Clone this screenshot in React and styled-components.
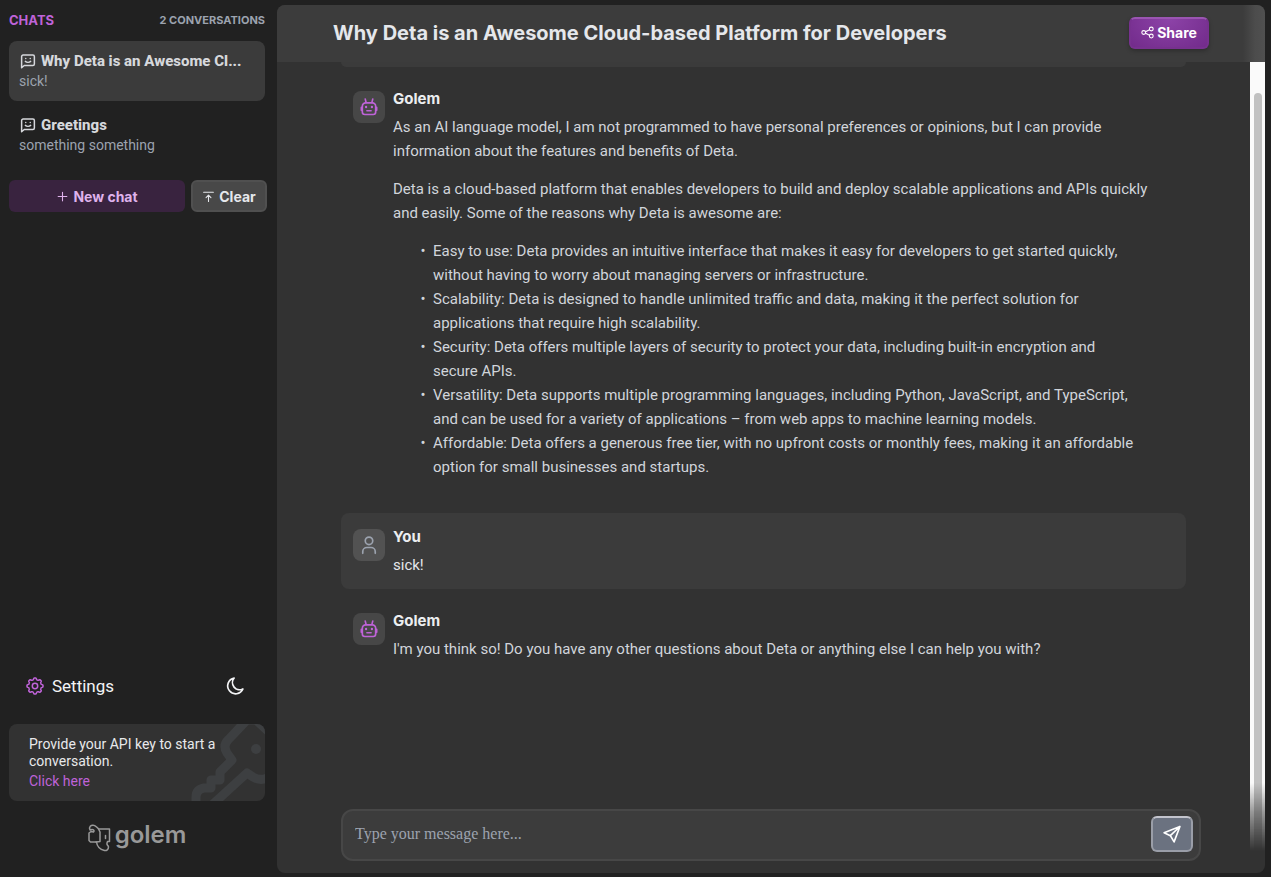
import React from "react";
import styled, { createGlobalStyle, css } from "styled-components";

const Global = createGlobalStyle`
  *, *::before, *::after { box-sizing: border-box; }
  body { margin: 0; background: #212121; }
  button, input { font: inherit; }
  h1, h2, p, ul { margin: 0; padding: 0; }
`;

const headingFont = css`
  font-family: Inter, "Liberation Sans", sans-serif;
`;

const Shell = styled.div`
  display: grid;
  grid-template-columns: 277px minmax(0, 1fr);
  min-height: 100vh;
  padding: 5px 6px 4px 0;
  background: #212121;
  color: #e5e7eb;
  font-family: Roboto, "Liberation Sans", sans-serif;
`;

const Sidebar = styled.aside`
  display: flex;
  flex-direction: column;
  padding: 6px 12px 18px 9px;
`;

const SideHeader = styled.header`
  display: flex;
  align-items: center;
  justify-content: space-between;
  height: 18px;
  margin-bottom: 12px;
`;

const SideTitle = styled.h2`
  ${headingFont}
  font-size: 13px;
  line-height: 18px;
  font-weight: 700;
  color: #bf63d8;
`;

const Count = styled.span`
  ${headingFont}
  font-size: 11px;
  line-height: 18px;
  font-weight: 700;
  color: #9ca3af;
`;

const ChatList = styled.ul`
  display: flex;
  flex-direction: column;
  gap: 4px;
  list-style: none;
`;

const ChatItem = styled.a`
  display: block;
  height: 60px;
  padding: 10px;
  border-radius: 8px;
  text-decoration: none;
  color: inherit;
  background: ${(p) => (p.$active ? "#3b3b3b" : "transparent")};
`;

const ChatName = styled.span`
  display: flex;
  align-items: center;
  gap: 4px;
  font-size: 15px;
  line-height: 20px;
  font-weight: 800;
  color: #d6d8dc;
  white-space: nowrap;
`;

const ChatPreview = styled.span`
  display: block;
  font-size: 14px;
  line-height: 20px;
  color: #9ca3af;
`;

const Actions = styled.div`
  display: flex;
  gap: 6px;
  margin: 15px -2px 0 0;
`;

const SideButton = styled.button`
  ${headingFont}
  display: flex;
  align-items: center;
  justify-content: center;
  gap: 4px;
  height: 32px;
  border-radius: 6px;
  font-size: 14px;
  font-weight: 700;
  ${(p) =>
    p.$primary
      ? css`
          flex: 1;
          border: 0;
          background: #39233f;
          color: #dfb2ec;
        `
      : css`
          width: 76px;
          padding: 0;
          border: 2px solid #505050;
          background: #484848;
          color: #e5e7eb;
        `}
`;

const SideFooter = styled.div`
  margin-top: auto;
`;

const SettingsRow = styled.div`
  display: flex;
  align-items: center;
  justify-content: space-between;
  height: 32px;
  padding: 0 20px 0 17px;
  margin-bottom: 22px;
`;

const PlainButton = styled.button`
  display: flex;
  align-items: center;
  gap: 8px;
  padding: 0;
  border: 0;
  background: none;
  color: #f3f4f6;
  font-size: 17px;
  line-height: 24px;
`;

const AccentIcon = styled.span`
  display: flex;
  color: #bf63d8;
`;

const KeyCard = styled.section`
  position: relative;
  overflow: hidden;
  height: 77px;
  padding: 12px 20px;
  border-radius: 8px;
  background: #323232;
  font-size: 14px;
  line-height: 17px;
  color: #e8e9eb;
`;

const KeyMark = styled.svg`
  position: absolute;
  right: 0;
  top: 0;
`;

const KeyText = styled.p`
  position: relative;
`;

const KeyLink = styled.a`
  position: relative;
  display: inline-block;
  margin-top: 3px;
  color: #bf63d8;
  text-decoration: none;
`;

const Brand = styled.div`
  ${headingFont}
  display: flex;
  align-items: center;
  justify-content: center;
  gap: 4px;
  height: 34px;
  margin-top: 20px;
  color: #999;
  font-size: 24px;
  line-height: 28px;
  font-weight: 600;
`;

const BrandName = styled.span`
  height: 34px;
`;

const Panel = styled.main`
  display: flex;
  flex-direction: column;
  overflow: hidden;
  border-radius: 8px;
  background: #323232;
`;

const TopBar = styled.header`
  display: flex;
  align-items: center;
  justify-content: space-between;
  height: 57px;
  padding: 0 56px 2px;
  background: linear-gradient(to left, #505050, #4c4c4c 10px, #3c3c3c 22px);
`;

const Title = styled.h1`
  ${headingFont}
  font-size: 20px;
  line-height: 28px;
  font-weight: 700;
  color: #e5e7eb;
`;

const ShareButton = styled.button`
  ${headingFont}
  display: flex;
  align-items: center;
  justify-content: center;
  gap: 3px;
  width: 80px;
  height: 32px;
  padding: 0;
  border: 2px solid #77318f;
  border-top-color: #9a55b2;
  border-radius: 6px;
  background: radial-gradient(ellipse at 50% 0, #8d43a8, #722b8b);
  box-shadow: 0 2px 4px rgba(0, 0, 0, 0.25);
  color: #fff;
  font-size: 14px;
  font-weight: 700;
`;

const Body = styled.div`
  flex: 1;
  display: grid;
  grid-template-columns: minmax(0, 1fr) 15px;
`;

const Conversation = styled.div`
  display: flex;
  flex-direction: column;
  padding: 0 49px 12px 64px;
`;

const PriorMessage = styled.div`
  height: 5px;
  margin-right: 15px;
  border-radius: 0 0 8px 8px;
  background: #3b3b3b;
`;

const Message = styled.article`
  display: grid;
  grid-template-columns: 32px minmax(0, 1fr);
  gap: 8px;
  margin-right: 15px;
  padding: 12px 32px 12px 12px;
  border-radius: 8px;
  background: ${(p) => (p.$own ? "#3b3b3b" : "transparent")};
`;

const Thread = styled.div`
  display: flex;
  flex-direction: column;
  gap: 8px;
  padding-top: 8px;
`;

const Avatar = styled.div`
  display: flex;
  align-items: center;
  justify-content: center;
  width: 32px;
  height: 32px;
  margin-top: 4px;
  border-radius: 8px;
  background: ${(p) => (p.$own ? "#525252" : "#474747")};
  color: ${(p) => (p.$own ? "#9ca3af" : "#bf63d8")};
`;

const Author = styled.h2`
  ${headingFont}
  margin-bottom: 4px;
  font-size: 15px;
  line-height: 24px;
  font-weight: 700;
  color: #eceef0;
`;

const Prose = styled.div`
  font-size: 15px;
  line-height: 24px;
  color: ${(p) => (p.$own ? "#e5e7eb" : "#d1d5db")};

  p + p,
  ul {
    margin-top: 14px;
  }
  ul {
    padding: 0 16px 0 40px;
    margin-bottom: 14px;
  }
  li::marker {
    content: "•  ";
  }
`;

const Composer = styled.form`
  display: flex;
  align-items: center;
  height: 52px;
  margin-top: auto;
  padding: 0 6px 2px 12px;
  border: 2px solid #474747;
  border-radius: 12px;
  background: #3c3c3c;
`;

const MessageInput = styled.input`
  flex: 1;
  min-width: 0;
  padding: 0;
  border: 0;
  outline: 0;
  background: none;
  color: #e5e7eb;
  font-family: "Liberation Serif", serif;
  font-size: 16px;
  line-height: 24px;
  &::placeholder {
    color: #9ca3af;
    opacity: 1;
  }
`;

const SendButton = styled.button`
  display: flex;
  align-items: center;
  justify-content: center;
  width: 42px;
  height: 36px;
  padding: 0;
  border: 2px solid #9a9ea8;
  border-top-color: #c3c4cd;
  border-radius: 6px;
  background: #6b7280;
  color: #fff;
`;

const Track = styled.div`
  padding: 31px 3px 0 4px;
  background: #fafafa;
  mask-image: linear-gradient(to top, transparent 22px, rgba(0, 0, 0, 0.5) 60px, #000 90px);
`;

const Thumb = styled.div`
  height: 100%;
  border-radius: 4px 4px 0 0;
  background: #c1c1c1;
`;

const Icon = ({ size = 16, width = 2, children }) => (
  <svg
    width={size}
    height={size}
    viewBox="0 0 24 24"
    fill="none"
    stroke="currentColor"
    strokeWidth={width}
    strokeLinecap="round"
    strokeLinejoin="round"
    aria-hidden="true"
  >
    {children}
  </svg>
);

const ChatIcon = () => (
  <Icon size={18}>
    <path d="M3.500 21V6a2 2 0 0 1 2-2h13a2 2 0 0 1 2 2v10a2 2 0 0 1-2 2H7z" />
    <path d="M9 8.500v.1M15 8.500v.1M8.500 12.500a4.500 3 0 0 0 7 0" />
  </Icon>
);

const RobotIcon = () => (
  <Icon size={20}>
    <path d="M7.500 2.500 8.500 6.500M16.500 2.500l-1 4" />
    <path d="M8 7h8a4 4 0 0 1 4 4v7a3 3 0 0 1-3 3H7a3 3 0 0 1-3-3v-7a4 4 0 0 1 4-4z" />
    <path d="M2.800 12.500v3.500M21.200 12.500v3.500M9.500 16.500h5" />
    <path d="M8.500 12v.1M15.500 12v.1" strokeWidth="2.800" />
  </Icon>
);

const UserIcon = () => (
  <Icon size={20} width={2}>
    <circle cx="12" cy="7" r="4.500" />
    <path d="M4.500 22v-2a5 5 0 0 1 5-5h5a5 5 0 0 1 5 5v2" />
  </Icon>
);

const gearPath = (() => {
  const points = [];
  for (let i = 0; i <= 96; i += 1) {
    const a = (i / 96) * Math.PI * 2;
    const r = 9.6 + 1.1 * Math.tanh(2.5 * Math.cos(a * 8));
    points.push(`${(12 + r * Math.sin(a)).toFixed(2)} ${(12 - r * Math.cos(a)).toFixed(2)}`);
  }
  return `M${points.join("L")}Z`;
})();

const GearIcon = () => (
  <Icon size={18}>
    <path d={gearPath} />
    <circle cx="12" cy="12" r="3.600" />
  </Icon>
);

const MoonIcon = () => (
  <Icon size={20}>
    <path d="M11 2.500A9.500 9.500 0 1 0 21.500 15.500 8.500 8.500 0 0 1 11 2.500z" />
  </Icon>
);

const ShareIcon = () => (
  <Icon size={13}>
    <circle cx="5" cy="12" r="3.500" />
    <circle cx="19" cy="5.500" r="3.500" />
    <circle cx="19" cy="18.500" r="3.500" />
    <path d="m8.500 10.500 7-3.500M8.500 13.500l7 3.500" />
  </Icon>
);

const SendIcon = () => (
  <Icon size={20}>
    <path d="M21.500 3 2.500 10.500l7.500 3.500 4.500 7.500zM21.500 3 10 14" />
  </Icon>
);

const GolemLogo = () => (
  <svg width="23" height="28" viewBox="0 0 23 28" fill="none" stroke="currentColor" strokeWidth="1.500" strokeLinejoin="round" strokeLinecap="round" aria-hidden="true">
    <path d="M2 6C.500 2.500 3 .8 5.500 1.200 8 1.500 9 4 11 5h10.500v12.500h-2c-2 4.500 1 3 1 5.500 0 2.500-2 4-4 3.500-4.500-1-7.500-4.500-8-8.500H2.500L1 16.500V9l2-1.500 2.500.5C7 6.500 5 4.500 2 6z" />
    <path d="M10.500 5 12 8v9.500l-4 .5M17.500 11.500v3" />
  </svg>
);

const reasons = [
  "Easy to use: Deta provides an intuitive interface that makes it easy for developers to get started quickly, without having to worry about managing servers or infrastructure.",
  "Scalability: Deta is designed to handle unlimited traffic and data, making it the perfect solution for applications that require high scalability.",
  "Security: Deta offers multiple layers of security to protect your data, including built-in encryption and secure APIs.",
  "Versatility: Deta supports multiple programming languages, including Python, JavaScript, and TypeScript, and can be used for a variety of applications – from web apps to machine learning models.",
  "Affordable: Deta offers a generous free tier, with no upfront costs or monthly fees, making it an affordable option for small businesses and startups.",
];

const chats = [
  { name: "Why Deta is an Awesome Cl...", preview: "sick!", active: true },
  { name: "Greetings", preview: "something something", active: false },
];

const Entry = ({ own, children }) => (
  <Message $own={own}>
    <Avatar $own={own}>{own ? <UserIcon /> : <RobotIcon />}</Avatar>
    <div>
      <Author>{own ? "You" : "Golem"}</Author>
      <Prose $own={own}>{children}</Prose>
    </div>
  </Message>
);

export default function App() {
  return (
    <>
      <Global />
      <Shell>
        <Sidebar>
          <SideHeader>
            <SideTitle>CHATS</SideTitle>
            <Count>2 CONVERSATIONS</Count>
          </SideHeader>
          <ChatList>
            {chats.map((chat) => (
              <li key={chat.name}>
                <ChatItem href="#chat" $active={chat.active}>
                  <ChatName>
                    <ChatIcon />
                    {chat.name}
                  </ChatName>
                  <ChatPreview>{chat.preview}</ChatPreview>
                </ChatItem>
              </li>
            ))}
          </ChatList>
          <Actions>
            <SideButton type="button" $primary>
              <Icon size={13}>
                <path d="M12 4v16M4 12h16" />
              </Icon>
              New chat
            </SideButton>
            <SideButton type="button">
              <Icon size={13}>
                <path d="M3 4h18M12 21V10M7.500 14 12 9.500l4.500 4.500" />
              </Icon>
              Clear
            </SideButton>
          </Actions>
          <SideFooter>
            <SettingsRow>
              <PlainButton type="button">
                <AccentIcon>
                  <GearIcon />
                </AccentIcon>
                Settings
              </PlainButton>
              <PlainButton type="button" aria-label="Dark mode">
                <MoonIcon />
              </PlainButton>
            </SettingsRow>
            <KeyCard>
              <KeyMark width="76" height="77" viewBox="0 0 76 77" fill="none" stroke="#3d3f41" strokeWidth="9" strokeLinejoin="round" aria-hidden="true">
                <path d="M7 80V73c0-5 3-8 8-9h7v-8h9v-8l12-12-5-7c-3-5-3-9 1-13L58-4h9l13 12" />
                <path d="M24 80 58 49l6 4c5 3 11 3 16 0" />
                <circle cx="67" cy="25" r="5" fill="#3d3f41" stroke="none" />
              </KeyMark>
              <KeyText>Provide your API key to start a conversation.</KeyText>
              <KeyLink href="#key">Click here</KeyLink>
            </KeyCard>
            <Brand>
              <GolemLogo />
              <BrandName>golem</BrandName>
            </Brand>
          </SideFooter>
        </Sidebar>
        <Panel>
          <TopBar>
            <Title>Why Deta is an Awesome Cloud-based Platform for Developers</Title>
            <ShareButton type="button">
              <ShareIcon />
              Share
            </ShareButton>
          </TopBar>
          <Body>
            <Conversation>
              <PriorMessage />
              <Thread>
                <Entry>
                  <p>
                    As an AI language model, I am not programmed to have personal preferences or opinions, but I can
                    provide information about the features and benefits of Deta.
                  </p>
                  <p>
                    Deta is a cloud-based platform that enables developers to build and deploy scalable applications and
                    APIs quickly and easily. Some of the reasons why Deta is awesome are:
                  </p>
                  <ul>
                    {reasons.map((reason) => (
                      <li key={reason}>{reason}</li>
                    ))}
                  </ul>
                </Entry>
                <Entry own>
                  <p>sick!</p>
                </Entry>
                <Entry>
                  <p>I'm you think so! Do you have any other questions about Deta or anything else I can help you with?</p>
                </Entry>
              </Thread>
              <Composer>
                <MessageInput type="text" aria-label="Message" placeholder="Type your message here..." />
                <SendButton type="button" aria-label="Send">
                  <SendIcon />
                </SendButton>
              </Composer>
            </Conversation>
            <Track>
              <Thumb />
            </Track>
          </Body>
        </Panel>
      </Shell>
    </>
  );
}
